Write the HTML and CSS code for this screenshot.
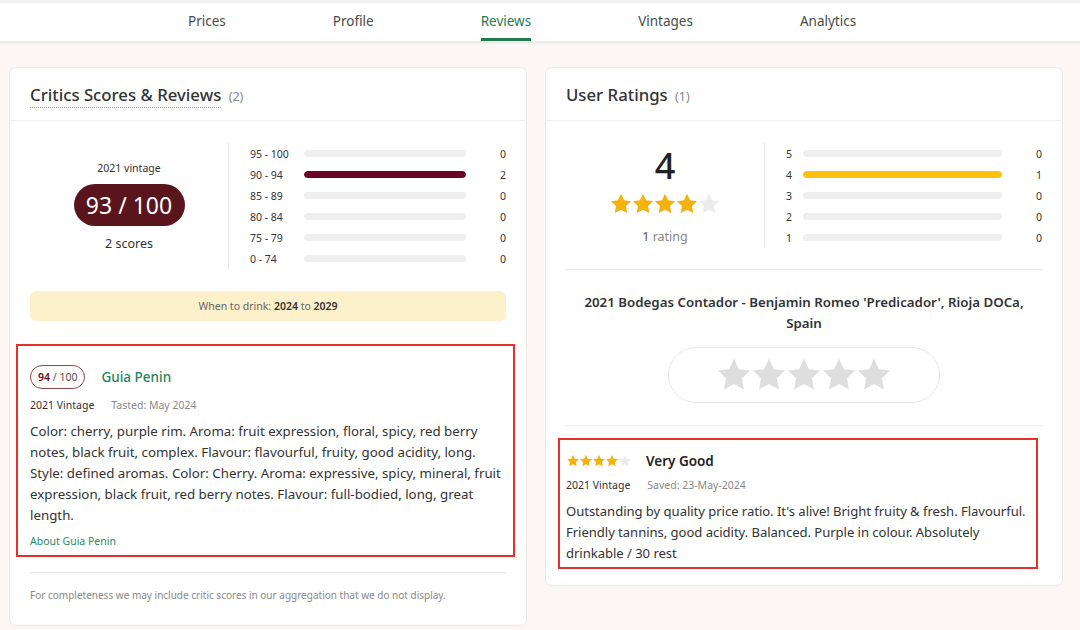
FILE: index.html
```html
<!DOCTYPE html>
<html lang="en">
<head>
<meta charset="utf-8">
<title>Reviews</title>
<link rel="stylesheet" href="styles.css">
</head>
<body>
<svg class="defs" width="0" height="0" aria-hidden="true">
  <defs>
    <symbol id="star" viewBox="0 0 24 24"><path d="M12 1.8l3.1 6.5 7 .9-5.1 4.9 1.3 7L12 17.7l-6.3 3.4 1.3-7L1.9 9.2l7-.9z"/></symbol>
  </defs>
</svg>
<div class="topstrip"></div>
<nav class="nav">
  <a class="nav-item">Prices</a>
  <a class="nav-item">Profile</a>
  <a class="nav-item active">Reviews</a>
  <a class="nav-item">Vintages</a>
  <a class="nav-item">Analytics</a>
</nav>
<main class="main">
  <section class="card">
    <header class="card-head">
      <h2 class="card-title"><span class="dotted">Critics Scores &amp; Reviews</span> <span class="count">(2)</span></h2>
    </header>
    <div class="card-body">
      <div class="summary">
        <div class="summary-left">
          <div class="vintage-label">2021 vintage</div>
          <div class="score-badge">93 / 100</div>
          <div class="scores-count">2 scores</div>
        </div>
        <div class="bars">
          <div class="bar-row"><span class="bar-label">95 - 100</span><span class="bar-track"><span class="bar-fill wine" style="width:0%"></span></span><span class="bar-count">0</span></div>
          <div class="bar-row"><span class="bar-label">90 - 94</span><span class="bar-track"><span class="bar-fill wine" style="width:100%"></span></span><span class="bar-count">2</span></div>
          <div class="bar-row"><span class="bar-label">85 - 89</span><span class="bar-track"><span class="bar-fill wine" style="width:0%"></span></span><span class="bar-count">0</span></div>
          <div class="bar-row"><span class="bar-label">80 - 84</span><span class="bar-track"><span class="bar-fill wine" style="width:0%"></span></span><span class="bar-count">0</span></div>
          <div class="bar-row"><span class="bar-label">75 - 79</span><span class="bar-track"><span class="bar-fill wine" style="width:0%"></span></span><span class="bar-count">0</span></div>
          <div class="bar-row"><span class="bar-label">0 - 74</span><span class="bar-track"><span class="bar-fill wine" style="width:0%"></span></span><span class="bar-count">0</span></div>
        </div>
      </div>
      <div class="drink">When to drink: <b>2024</b> to <b>2029</b></div>
      <article class="review review-left">
        <div class="review-head">
          <span class="mini-badge"><b>94</b> / 100</span>
          <span class="critic">Guia Penin</span>
        </div>
        <div class="meta"><span class="meta-vintage">2021 Vintage</span><span class="meta-date">Tasted: May 2024</span></div>
        <p class="review-text">Color: cherry, purple rim. Aroma: fruit expression, floral, spicy, red berry notes, black fruit, complex. Flavour: flavourful, fruity, good acidity, long. Style: defined aromas. Color: Cherry. Aroma: expressive, spicy, mineral, fruit expression, black fruit, red berry notes. Flavour: full-bodied, long, great length.</p>
        <a class="about">About Guia Penin</a>
      </article>
      <p class="footnote">For completeness we may include critic scores in our aggregation that we do not display.</p>
    </div>
  </section>

  <section class="card">
    <header class="card-head">
      <h2 class="card-title">User Ratings <span class="count">(1)</span></h2>
    </header>
    <div class="card-body">
      <div class="summary">
        <div class="summary-left">
          <div class="big-rating">4</div>
          <div class="stars stars-big">
            <svg class="star gold"><use href="#star"/></svg><svg class="star gold"><use href="#star"/></svg><svg class="star gold"><use href="#star"/></svg><svg class="star gold"><use href="#star"/></svg><svg class="star grey"><use href="#star"/></svg>
          </div>
          <div class="rating-count"><span class="num">1</span> rating</div>
        </div>
        <div class="bars">
          <div class="bar-row user"><span class="bar-label">5</span><span class="bar-track"><span class="bar-fill yellow" style="width:0%"></span></span><span class="bar-count">0</span></div>
          <div class="bar-row user"><span class="bar-label">4</span><span class="bar-track"><span class="bar-fill yellow" style="width:100%"></span></span><span class="bar-count">1</span></div>
          <div class="bar-row user"><span class="bar-label">3</span><span class="bar-track"><span class="bar-fill yellow" style="width:0%"></span></span><span class="bar-count">0</span></div>
          <div class="bar-row user"><span class="bar-label">2</span><span class="bar-track"><span class="bar-fill yellow" style="width:0%"></span></span><span class="bar-count">0</span></div>
          <div class="bar-row user"><span class="bar-label">1</span><span class="bar-track"><span class="bar-fill yellow" style="width:0%"></span></span><span class="bar-count">0</span></div>
        </div>
      </div>
      <hr class="sep sep-after-summary">
      <div class="wine-name">2021 Bodegas Contador - Benjamin Romeo 'Predicador', Rioja DOCa, Spain</div>
      <div class="rate-pill">
        <svg class="star pill-star"><use href="#star"/></svg><svg class="star pill-star"><use href="#star"/></svg><svg class="star pill-star"><use href="#star"/></svg><svg class="star pill-star"><use href="#star"/></svg><svg class="star pill-star"><use href="#star"/></svg>
      </div>
      <hr class="sep sep-after-pill">
      <article class="review review-right">
        <div class="review-head">
          <span class="stars stars-small">
            <svg class="star gold"><use href="#star"/></svg><svg class="star gold"><use href="#star"/></svg><svg class="star gold"><use href="#star"/></svg><svg class="star gold"><use href="#star"/></svg><svg class="star grey"><use href="#star"/></svg>
          </span>
          <span class="review-title">Very Good</span>
        </div>
        <div class="meta"><span class="meta-vintage">2021 Vintage</span><span class="meta-date">Saved: 23-May-2024</span></div>
        <p class="review-text">Outstanding by quality price ratio. It's alive! Bright fruity &amp; fresh. Flavourful. Friendly tannins, good acidity. Balanced. Purple in colour. Absolutely drinkable / 30 rest</p>
      </article>
    </div>
  </section>
</main>
</body>
</html>
```

FILE: styles.css
```css
* { box-sizing: border-box; }
html, body { margin: 0; padding: 0; }
body {
  background: #fcf7f4;
  font-family: "Noto Sans", "Open Sans", sans-serif;
  color: #333;
  width: 1080px;
  height: 630px;
  overflow: hidden;
}
.defs { position: absolute; width: 0; height: 0; }

.topstrip { height: 3px; background: #f1f1f1; }
.nav {
  height: 39px;
  background: #fff;
  display: flex;
  align-items: stretch;
  gap: 107px;
  padding-left: 188px;
  box-shadow: 0 1px 2px rgba(0,0,0,0.08);
  border-bottom: 1px solid #ececec;
}
.nav-item {
  font-size: 13.5px;
  color: #4a4a4a;
  display: flex;
  align-items: center;
  padding-bottom: 2px;
  border-bottom: 3px solid transparent;
  padding-top: 3px;
}
.nav-item.active {
  color: #227a4f;
  border-bottom-color: #227a4f;
}

.main {
  display: grid;
  grid-template-columns: 518px 518px;
  gap: 18px;
  padding: 25px 0 0 9px;
  align-items: start;
}
.card {
  background: #fff;
  border: 1px solid #ede9e6;
  border-radius: 7px;
}
.card-head {
  height: 53px;
  border-bottom: 1px solid #eeeeee;
  padding: 0 20px;
  display: flex;
  align-items: center;
}
.card-title {
  margin: 0;
  font-size: 16.75px;
  font-weight: 500;
  color: #333;
}
.dotted { border-bottom: 1px dotted #9a9a9a; padding-bottom: 1px; }
.count { font-size: 12.5px; color: #888; font-weight: 400; margin-left: 3px; }

.card-body { padding: 22px 20px 0 20px; }

.summary {
  display: grid;
  grid-template-columns: 199px 1fr;
}
.summary-left {
  display: flex;
  flex-direction: column;
  align-items: center;
  justify-content: center;
  border-right: 1px solid #e9e9e9;
}
.vintage-label { font-size: 10.5px; color: #333; line-height: 14px; }
.score-badge {
  margin-top: 9px;
  background: #5a141b;
  color: #fff;
  font-size: 23px;
  height: 42px;
  width: 111px;
  border-radius: 21px;
  display: flex;
  align-items: center;
  justify-content: center;
}
.scores-count { margin-top: 9px; font-size: 12.5px; color: #333; }

.bars { padding-left: 21px; }
.bar-row {
  height: 21px;
  display: grid;
  grid-template-columns: 54px 162px 1fr;
  align-items: center;
  font-size: 10.5px;
  color: #333;
}
.bar-row.user { grid-template-columns: 17px 199px 1fr; }
.bar-track {
  height: 7px;
  background: #efefef;
  border-radius: 4px;
  overflow: hidden;
  display: block;
}
.bar-fill { display: block; height: 100%; border-radius: 4px; }
.bar-fill.wine { background: #6b0526; }
.bar-fill.yellow { background: #fcc10f; }
.bar-count { text-align: right; }

.drink {
  margin-top: 22px;
  height: 30px;
  background: #fdf1cc;
  border-radius: 6px;
  font-size: 10.5px;
  color: #666;
  display: flex;
  align-items: center;
  justify-content: center;
  white-space: pre;
}
.drink b { color: #333; font-weight: 600; }

.review {
  border: 2px solid #e8302b;
}
.review-left {
  margin: 23px -9px 0 -14px;
  padding: 19px 7px 7px 12px;
}
.review-head { display: flex; align-items: center; }
.mini-badge {
  height: 24px;
  padding: 0 7px;
  border: 1px solid #8c4a4a;
  border-radius: 12px;
  font-size: 10.5px;
  color: #555;
  background: #fffafa;
  display: flex;
  align-items: center;
  white-space: pre;
}
.mini-badge b { color: #5a141b; font-weight: 600; }
.critic { margin-left: 16px; font-size: 13.5px; font-weight: 500; color: #24855a; }
.meta { margin-top: 9px; font-size: 10.5px; display: flex; gap: 17px; }
.meta-vintage { color: #333; }
.meta-date { color: #8a8a8a; }
.review-text {
  margin: 9px 0 0 0;
  font-size: 13.3px;
  line-height: 21px;
  color: #333;
}
.about { display: block; margin-top: 8px; font-size: 10.5px; color: #2a8a5a; }

.footnote {
  margin: 15px 0 0 0;
  border-top: 1px solid #e6e6e6;
  padding: 15px 0 23px;
  font-size: 10px;
  color: #888;
}

/* right card */
.big-rating { font-size: 36px; font-weight: 500; color: #222; line-height: 38px; }
.stars { display: flex; }
.star { display: block; }
.star.gold { fill: #f5b20e; }
.star.grey { fill: #ececec; }
.stars-big { margin-top: 7px; }
.stars-big .star { width: 24px; height: 24px; margin: 0 -1px; }
.rating-count { margin-top: 12px; font-size: 12.5px; color: #888; }
.rating-count .num { color: #555; }

.sep { border: 0; border-top: 1px solid #e9e9e9; margin: 0; }
.sep-after-summary { margin-top: 21px; }
.wine-name {
  margin: 22px 0 0;
  text-align: center;
  font-size: 13.3px;
  font-weight: 600;
  line-height: 21px;
  color: #333;
  padding: 0 10px;
}
.rate-pill {
  margin: 13px auto 0;
  width: 272px;
  height: 56px;
  border: 1px solid #e8e8e8;
  border-radius: 28px;
  display: flex;
  align-items: center;
  justify-content: center;
}
.pill-star { width: 38px; height: 38px; fill: #dedede; margin: 0 -1.5px; }
.sep-after-pill { margin-top: 22px; }

.review-right {
  margin: 12px 4px 16px -8px;
  padding: 12px 0 3px 6px;
}
.stars-small .star { width: 14px; height: 14px; margin-right: -1px; }
.review-title { margin-left: 15px; font-size: 13.5px; font-weight: 600; color: #222; }
.review-right .meta { margin-top: 8px; }
.review-right .review-text { margin-top: 9px; font-size: 13.1px; letter-spacing: -0.05px; }
```
